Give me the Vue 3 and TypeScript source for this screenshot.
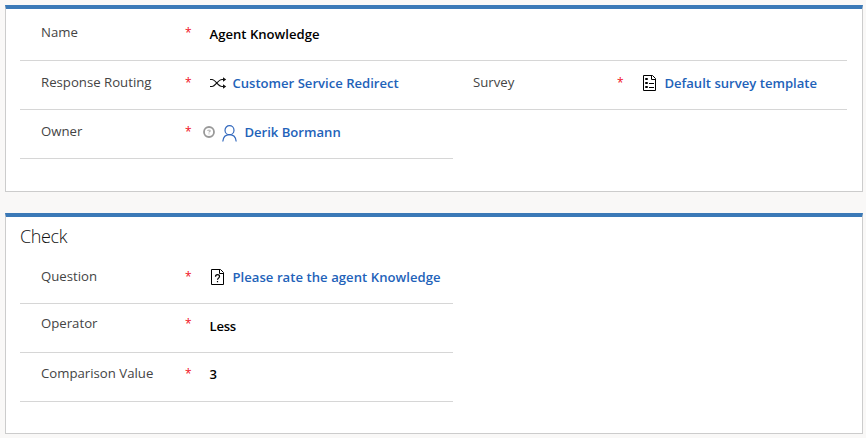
<script setup lang="ts">
type IconName = 'route' | 'survey' | 'person' | 'question'

interface Field {
  key: string
  label: string
  value: string
  icon?: IconName
  presence?: boolean
}

interface Row {
  id: string
  half?: boolean
  fields: Field[]
}

interface Section {
  id: string
  title?: string
  rows: Row[]
}

const sections: Section[] = [
  {
    id: 'general',
    rows: [
      { id: 'name-row', fields: [{ key: 'name', label: 'Name', value: 'Agent Knowledge' }] },
      {
        id: 'routing-row',
        fields: [
          { key: 'routing', label: 'Response Routing', value: 'Customer Service Redirect', icon: 'route' },
          { key: 'survey', label: 'Survey', value: 'Default survey template', icon: 'survey' },
        ],
      },
      { id: 'owner-row', half: true, fields: [{ key: 'owner', label: 'Owner', value: 'Derik Bormann', icon: 'person', presence: true }] },
    ],
  },
  {
    id: 'check',
    title: 'Check',
    rows: [
      { id: 'question-row', half: true, fields: [{ key: 'question', label: 'Question', value: 'Please rate the agent Knowledge', icon: 'question' }] },
      { id: 'operator-row', half: true, fields: [{ key: 'operator', label: 'Operator', value: 'Less' }] },
      { id: 'comparison-row', half: true, fields: [{ key: 'comparison', label: 'Comparison Value', value: '3' }] },
    ],
  },
]
</script>

<template>
  <main class="form">
    <section v-for="s in sections" :key="s.id" class="card" :class="s.id">
      <h2 v-if="s.title" class="title">{{ s.title }}</h2>
      <div v-for="r in s.rows" :key="r.id" class="row" :class="[r.id, { half: r.half }]">
        <div v-for="f in r.fields" :key="f.key" class="field" :class="f.key">
          <span class="label">{{ f.label }}</span>
          <span class="required">*</span>
          <span class="value" :class="{ link: f.icon, owned: f.presence }">
            <svg v-if="f.presence" class="presence" width="12" height="12" viewBox="0 0 12 12" fill="none">
              <circle cx="6" cy="6" r="5" stroke="#999" stroke-width="1.8" />
              <path d="M4.8 5V4.2h2.4V5.6H6v1M6 7.4v1" stroke="#aaa" stroke-width="0.9" />
            </svg>
            <svg v-if="f.icon === 'route'" class="icon" width="17" height="16" viewBox="0 0 17 16" fill="none" stroke="#111">
              <path d="M0 4.500h2C5.500 4.500 8 11.500 12 11.500h2M0 11.500h2C5.500 11.500 8 4.500 12 4.500h2" stroke-width="1.100" />
              <path d="M13 2.300v4.400l3.200-2.200zM13 9.300v4.400l3.200-2.200z" fill="#111" stroke="none" />
            </svg>
            <svg v-else-if="f.icon === 'survey'" class="icon" width="17" height="16" viewBox="0 0 17 16" fill="none" stroke="#000">
              <path d="M1.500.5h9l3 3v12h-12zM9.500.5v4h4" />
              <path d="M3.500 3.500h2v1h-2zM3.500 7.500h2v1h-2zM3.500 11.500h2v1h-2zM7 8.500h5M7 12.500h5" />
            </svg>
            <svg v-else-if="f.icon === 'person'" class="icon person" width="15" height="17" viewBox="0 0 15 17" fill="none" stroke="#3268bd" stroke-width="1.200">
              <circle cx="7.500" cy="5.200" r="4.500" />
              <path d="M.8 16.500c.4-4.200 3-6.800 6.700-6.800s6.300 2.600 6.700 6.800" />
            </svg>
            <svg v-else-if="f.icon === 'question'" class="icon" width="17" height="16" viewBox="0 0 17 16" fill="none" stroke="#000">
              <path d="M1.500.5h9l3 3v12h-12zM9.500.5v4h4" />
              <path d="M5.500 7.800c0-1.400.8-2.100 2-2.100s2 .7 2 1.800c0 1.500-2 1.700-2 3.300M7.500 12v1.200" stroke-width="1.200" />
            </svg>
            <span class="text">{{ f.value }}</span>
          </span>
        </div>
      </div>
    </section>
  </main>
</template>

<style>
body {
  background: #f9f8f7;
}
</style>

<style scoped>
.form {
  box-sizing: border-box;
  height: 438px;
  padding: 5px 3px 0 5px;
  display: flex;
  flex-direction: column;
  gap: 21px;
  font-family: "Open Sans", "Noto Sans", sans-serif;
  font-size: 13.2px;
  line-height: 20px;
}
.card {
  box-sizing: border-box;
  height: 187px;
  padding: 0 15px 0 14px;
  border: 1px solid #ccc;
  border-top: 4px solid #3b79b7;
  background: #fff;
}
.check {
  height: 221px;
}
.title {
  box-sizing: border-box;
  height: 38px;
  margin: 0;
  padding-top: 7px;
  color: #111;
  font-size: 18px;
  font-weight: 300;
  line-height: 24px;
  letter-spacing: -0.4px;
}
.row {
  box-sizing: border-box;
  height: 49px;
  border-bottom: 1px solid #d6d6d6;
  display: flex;
}
.name-row {
  height: 52px;
}
.half {
  width: 433px;
}
.field {
  flex: none;
  width: 432px;
  padding: 11px 0 0 21px;
  box-sizing: border-box;
  display: flex;
  align-items: flex-start;
  white-space: nowrap;
}
.routing-row {
  width: 827px;
}
.name {
  padding-top: 13px;
}
.operator {
  padding-top: 9px;
}
.comparison {
  padding-top: 10px;
}
.label {
  width: 144px;
  color: #444;
}
.required {
  width: 24.6px;
  padding-top: 1px;
  color: #f01020;
  font-size: 12px;
}
.value {
  padding-top: 1px;
  display: flex;
  align-items: center;
  color: #000;
  font-weight: 600;
  font-size: 13.1px;
}
.operator .value {
  padding-top: 3px;
  letter-spacing: -0.3px;
}
.name .value {
  padding-top: 1.5px;
}
.link {
  color: #2262b9;
}
.icon {
  margin-right: 5.8px;
}
.person {
  margin-top: 2px;
}
.question .value {
  letter-spacing: 0.05px;
}
.owned {
  margin-left: -6.6px;
}
.owned .icon {
  margin-right: 7.4px;
}
.presence {
  margin-right: 7px;
}
</style>
